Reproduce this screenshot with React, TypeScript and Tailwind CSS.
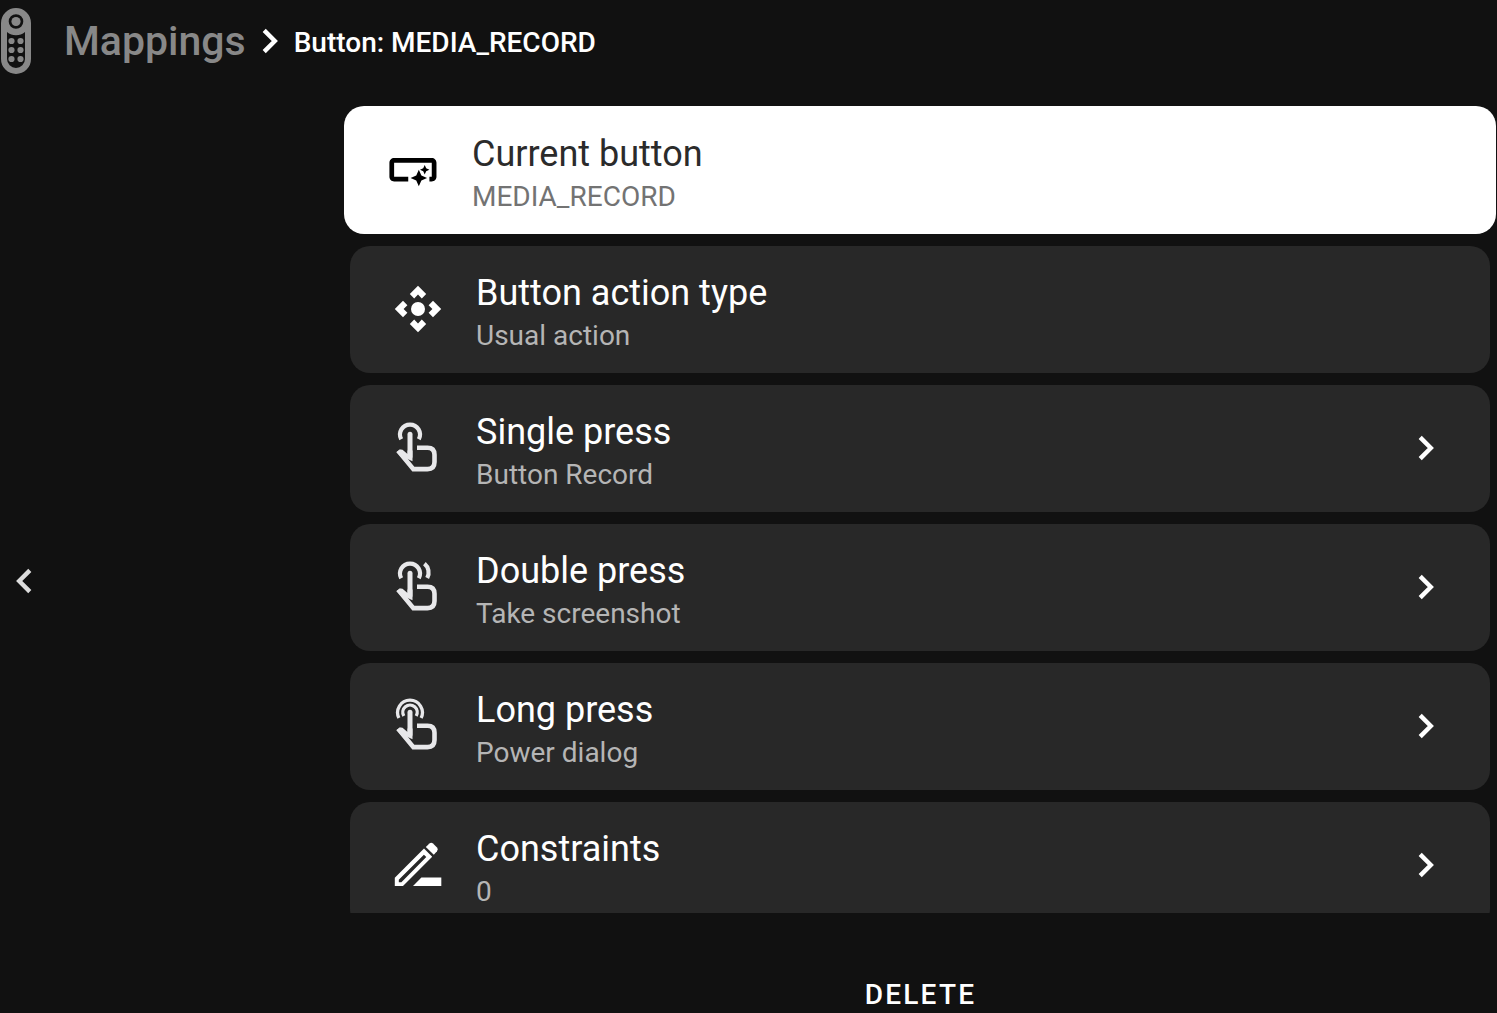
import type { ReactNode } from "react";
import clsx from "clsx";

type Row = {
  id: string;
  title: string;
  summary: string;
  icon: ReactNode;
  focused?: boolean;
  hasNext?: boolean;
};

const ROWS: Row[] = [
  {
    id: "current",
    title: "Current button",
    summary: "MEDIA_RECORD",
    icon: <SmartButtonIcon />,
    focused: true,
  },
  { id: "type", title: "Button action type", summary: "Usual action", icon: <DpadIcon /> },
  {
    id: "single",
    title: "Single press",
    summary: "Button Record",
    icon: <TouchIcon kind="single" />,
    hasNext: true,
  },
  {
    id: "double",
    title: "Double press",
    summary: "Take screenshot",
    icon: <TouchIcon kind="double" />,
    hasNext: true,
  },
  {
    id: "long",
    title: "Long press",
    summary: "Power dialog",
    icon: <TouchIcon kind="long" />,
    hasNext: true,
  },
  { id: "constraints", title: "Constraints", summary: "0", icon: <PencilIcon />, hasNext: true },
];

export default function App() {
  return (
    <div className="flex h-screen flex-col overflow-hidden bg-[#111111] font-['Roboto',sans-serif] text-white">
      <header className="flex h-[82px] shrink-0 items-center">
        <RemoteIcon />
        <nav aria-label="Breadcrumb" className="flex items-center pl-[33px] font-medium">
          <a href="#mappings" className="text-[41px] leading-[48px] text-[#888888]">
            Mappings
          </a>
          <Chevron className="ml-4" />
          <h1 className="ml-4 pt-1 text-[28px] leading-[36px]">Button: MEDIA_RECORD</h1>
        </nav>
      </header>

      <div className="flex min-h-0 flex-1">
        <aside className="flex w-[344px] shrink-0 items-center pt-[66px] pl-4">
          <button type="button" aria-label="Back" className="text-[#dddddd]">
            <Chevron className="rotate-180" />
          </button>
        </aside>

        <main className="flex min-w-0 flex-1 flex-col">
          <ul className="flex min-h-0 flex-1 flex-col gap-3 overflow-hidden pt-6 pr-px">
            {ROWS.map((row) => (
              <li key={row.id} className={clsx("shrink-0", !row.focused && "px-1.5")}>
                <RowButton row={row} />
              </li>
            ))}
          </ul>
          <footer className="flex h-[100px] shrink-0 items-end justify-center">
            <button type="button" className="text-[28px] leading-[36px] font-medium tracking-[0.08em]">
              DELETE
            </button>
          </footer>
        </main>
      </div>
    </div>
  );
}

function RowButton({ row }: { row: Row }) {
  return (
    <button
      type="button"
      className={clsx(
        "flex w-full items-center rounded-[20px] pr-14 pl-11 text-left",
        row.focused ? "h-32 gap-9 bg-white text-[#2b2b2b]" : "h-[127px] gap-[34px] bg-[#282828] pb-0.5",
      )}
    >
      {row.icon}
      <span className="flex min-w-0 flex-1 flex-col pt-1.5">
        <span className="text-[36px] leading-[48px]">{row.title}</span>
        <span className={clsx("text-[28px] leading-[38px]", row.focused ? "text-[#737373]" : "text-[#b5b5b5]")}>
          {row.summary}
        </span>
      </span>
      {row.hasNext && <Chevron />}
    </button>
  );
}

function Chevron({ className }: { className?: string }) {
  return (
    <svg
      className={clsx("shrink-0", className)}
      width="16"
      height="26"
      viewBox="0 0 16 26"
      fill="none"
      stroke="currentColor"
      strokeWidth="4.4"
      aria-hidden
    >
      <path d="M2.2 2.4 12.8 13 2.2 23.6" />
    </svg>
  );
}

function RemoteIcon() {
  return (
    <svg className="ml-px shrink-0" width="30" height="66" viewBox="0 0 30 66" fill="#888888" aria-hidden>
      <path
        fillRule="evenodd"
        d="M15 0a15 15 0 0 1 15 15v36a15 15 0 0 1-30 0V15A15 15 0 0 1 15 0zM15 6.2a7.3 7.3 0 1 0 0 14.6 7.3 7.3 0 0 0 0-14.6zM6 24v27a9 9 0 0 0 18 0V24a14 14 0 0 1-18 0z"
      />
      <circle cx="15" cy="13.5" r="4.6" />
      {[33, 42, 51].map((y) => (
        <g key={y}>
          <circle cx="10.5" cy={y} r="3.1" />
          <circle cx="19.5" cy={y} r="3.1" />
        </g>
      ))}
    </svg>
  );
}

function SmartButtonIcon() {
  return (
    <svg className="shrink-0" width="48" height="48" viewBox="1.4 1.9 20.4 20.4" fill="#000000" overflow="visible" aria-hidden>
      <path d="M22 9v6c0 1.1-.9 2-2 2h-1v-2h1V9H4v6h6v2H4c-1.1 0-2-.9-2-2V9c0-1.1.9-2 2-2h16c1.1 0 2 .9 2 2z" />
      <path d="M14.5 19l1.09-2.41L18 15.5l-2.41-1.09L14.5 12l-1.09 2.41L11 15.5l2.41 1.09L14.5 19zM17 14l.62-1.38L19 12l-1.38-.62L17 10l-.62 1.38L15 12l1.38.62L17 14z" />
    </svg>
  );
}

function DpadIcon() {
  return (
    <svg className="shrink-0" width="48" height="48" viewBox="0 0 48 48" fill="currentColor" aria-hidden>
      <circle cx="24" cy="24" r="7" />
      {[0, 90, 180, 270].map((deg) => (
        <path key={deg} d="M24 .8l8.2 8.2-4.4 4.4-3.8-3.8-3.8 3.8L15.8 9z" transform={`rotate(${deg} 24 24)`} />
      ))}
    </svg>
  );
}

function TouchIcon({ kind }: { kind: "single" | "double" | "long" }) {
  return (
    <svg
      className="shrink-0"
      width="48"
      height="56"
      viewBox="0 -0.5 48 56"
      fill="none"
      stroke="#e8e8ea"
      strokeWidth="4.6"
      aria-hidden
    >
      {kind === "long" ? (
        <g strokeWidth="3.3">
          <path d="M4.9 19.6A12.4 12.4 0 1 1 27.1 19.6" />
          <path d="M9.8 17.5A7.2 7.2 0 1 1 22.2 17.5" />
        </g>
      ) : (
        <path strokeWidth="4.2" d="M7.2 18.8A10 10 0 1 1 24.8 18.8" />
      )}
      {kind === "double" && <path strokeWidth="4.2" d="M30.4 4.2A11.5 11.5 0 0 1 33.2 18.6" />}
      <path strokeWidth="5" strokeLinecap="round" d="M16 13.8V36" />
      <path d="M23 27.2H33.5Q40.5 27.2 40.5 34.2V41.5Q40.5 48.6 33.5 48.6H19.4L4.2 30.2" />
      <path fill="#e8e8ea" stroke="none" d="M2.4 31.4L5.6 29.2Q8.2 28.6 10 30.4L13.5 33.6V30H18.5V40.8L13 38.2L10 39.5z" />
    </svg>
  );
}

function PencilIcon() {
  return (
    <svg className="shrink-0" width="48" height="48" viewBox="0 -0.5 48 48" fill="currentColor" aria-hidden>
      <path fillRule="evenodd" d="M.8 36.3 30 7.1l8.2 8.2L9 44.5H.8zM4.8 38.2v2.6h2.6L32.3 15.6 29.9 13.2z" />
      <path d="M31.8 5.4 35.4 2Q37.2 .4 39 2L43 6Q44.6 7.8 43 9.7L39.8 13.2z" />
      <path d="M19 44.5 27.4 36H47.3v8.5z" />
    </svg>
  );
}
